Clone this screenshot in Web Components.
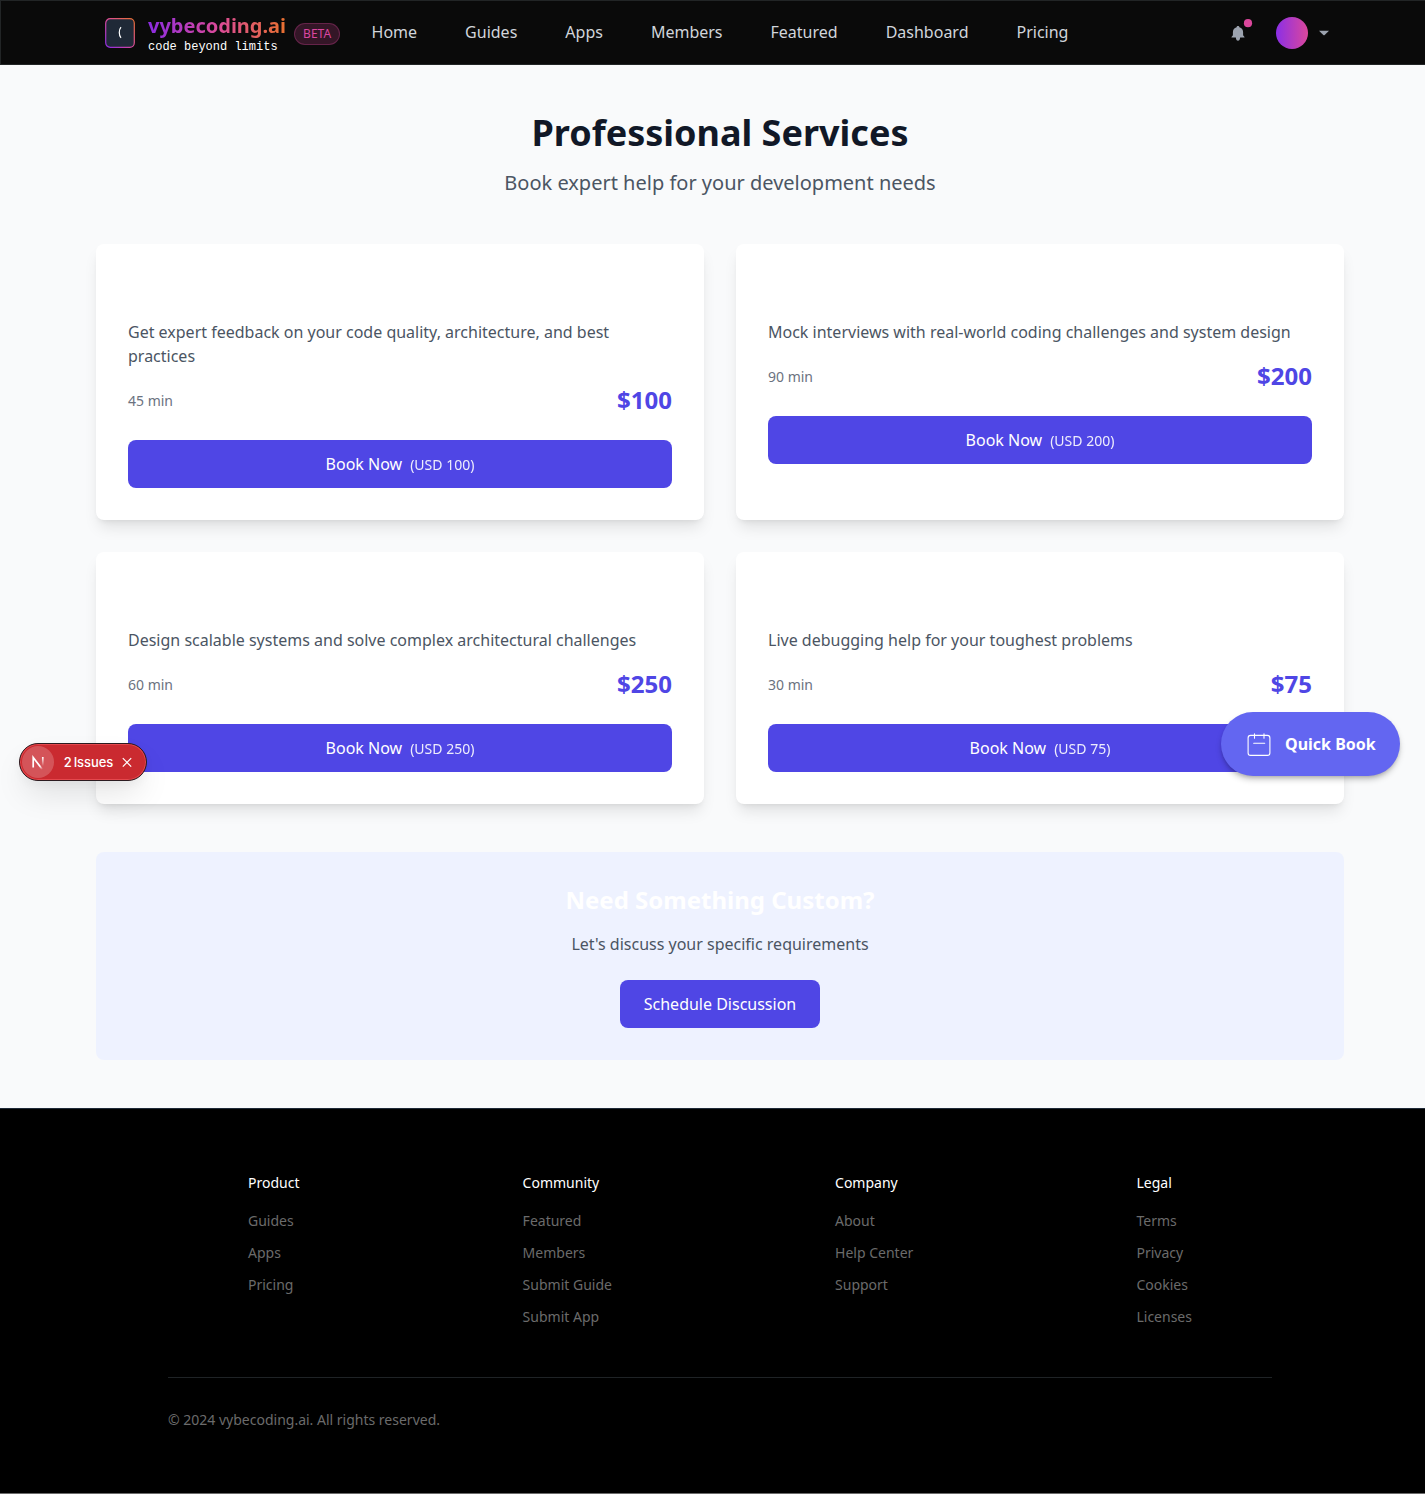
<!DOCTYPE html>
<html lang="en">
<head>
<meta charset="utf-8">
<title>vybecoding.ai - Professional Services</title>
<style>
html,body{margin:0;padding:0}
html{overflow:hidden;background:#000}
body{width:1440px;font:16px/24px "Noto Sans",sans-serif;color:#4b5563;background:#f9fafb}
</style>
</head>
<body>
<app-page></app-page>
<script>
const define = (name, css, html) => customElements.define(name, class extends HTMLElement {
  constructor() {
    super();
    const t = document.createElement('template');
    t.innerHTML = `<style>*{box-sizing:border-box}${css}</style>` + (typeof html === 'function' ? html(this) : html);
    this.attachShadow({ mode: 'open' }).append(t.content.cloneNode(true));
  }
});

define('brand-logo', `
:host{display:flex;align-items:center;height:64px}
.tile{display:block;width:32px;height:32px;margin:0 12px 0 8px}
.name{font-size:20px;line-height:28px;font-weight:700;background:linear-gradient(90deg,#8b2be2,#db4a9b 50%,#e8702f);background-clip:text;-webkit-background-clip:text;color:transparent;height:28px;margin-top:-1px}
.tag{font:12px/12px "Liberation Mono",monospace;color:#fff;white-space:pre;padding-top:1px}
.beta{margin-left:8px;height:22px;padding:0 8px;border:1px solid rgba(219,71,156,.3);border-radius:11px;background:rgba(219,71,156,.2);color:#db47a0;font-size:12px;line-height:20px;margin-top:2px}
`, `<svg class="tile" viewBox="0 0 32 32"><defs><linearGradient id="g" x1="0" y1="1" x2="1" y2="0"><stop stop-color="#8b2be2"/><stop offset=".5" stop-color="#db4a9b"/><stop offset="1" stop-color="#e8702f"/></linearGradient></defs><rect x="1.7" y="1.7" width="28.6" height="28.6" rx="4.5" fill="#1f2937" stroke="url(#g)" stroke-width="1.2"/><path d="M17 10.1C14.7 12.8 14.7 18 17 20.8" fill="none" stroke="#fff" stroke-width="1.2"/></svg>
<div><div class="name">vybecoding.ai</div><div class="tag">code beyond limits</div></div><span class="beta">BETA</span>`);

define('nav-link', `:host{display:block;color:#d1d5db;line-height:24px}`, `<slot></slot>`);

define('user-tools', `
:host{display:flex;align-items:center;height:64px}
svg{display:block;overflow:visible}
.avatar{width:32px;height:32px;border-radius:50%;background:linear-gradient(90deg,#8b2fe6,#db479c);margin:0 10px 0 26px}
`, `<svg width="24" height="32" viewBox="0 0 24 32"><path transform="translate(0 -.8)" d="M12 9.8c.9 0 1.3.5 1.4 1.2 2.4.7 3.7 2.6 3.7 5v3.1l1.4 1.7v.6h-13v-.6l1.4-1.7V16c0-2.4 1.3-4.3 3.7-5 .1-.7.5-1.2 1.4-1.2zM9.8 21h4.4c-.2 2.4-1 3.5-2.2 3.5S10 23.4 9.8 21z" fill="#9ca3af"/><circle cx="22" cy="6.2" r="4.1" fill="#db479c"/></svg>
<div class="avatar"></div><svg width="12" height="8"><path d="M1 1.7h10L6.7 6q-.7.6-1.4 0z" fill="#9ca3af"/></svg>`);

define('site-header', `
:host{display:block;height:65px;background:#0a0a0a;border:1px solid #222526;border-right:0}
.in{width:1248px;margin:0 auto 0 95px;display:flex;align-items:center;height:63px}
nav{display:flex;gap:48px;margin:0 0 2px 31.5px;height:24px}
user-tools{margin:0 14px 0 auto}
`, `<div class="in"><brand-logo></brand-logo><nav>${['Home','Guides','Apps','Members','Featured','Dashboard','Pricing'].map(n=>`<nav-link>${n}</nav-link>`).join('')}</nav><user-tools></user-tools></div>`);

define('action-button', `
:host{display:flex;align-items:center;justify-content:center;gap:8px;height:48px;padding:0 24px;border-radius:8px;background:#4f46e5;color:#fff;box-sizing:border-box}
::slotted(small){font-size:14px;opacity:.9}
`, `<slot></slot>`);

define('service-card', `
:host{display:block;box-sizing:border-box;padding:76px 32px 32px;background:#fff;border-radius:8px;box-shadow:0 10px 15px -3px rgba(0,0,0,.1),0 4px 6px -4px rgba(0,0,0,.1)}
p{margin:0 0 16px}
.meta{display:flex;justify-content:space-between;align-items:center;margin-bottom:24px}
.time{font-size:14px;line-height:20px;color:#6b7280;padding-top:2px}
.price{font-size:24px;line-height:32px;font-weight:700;color:#4f46e5}
small{padding-top:1px}
`, el => `<p><slot></slot></p><div class="meta"><span class="time">${el.getAttribute('time')}</span><span class="price">$${el.getAttribute('price')}</span></div><action-button><span>Book Now</span><small>(USD ${el.getAttribute('price')})</small></action-button>`);

define('custom-panel', `
:host{display:flex;flex-direction:column;align-items:center;padding:32px;background:#eef2ff;border-radius:8px}
h2{margin:0 0 16px;font-size:24px;line-height:32px;color:#fff}
p{margin:0 0 24px}
`, `<h2>Need Something Custom?</h2><p>Let's discuss your specific requirements</p><action-button>Schedule Discussion</action-button>`);

define('services-main', `
:host{display:block;padding:47px 96px 48px}
header{text-align:center}
h1{margin:0 0 16px;font-size:36px;line-height:40px;color:#111827;padding-top:1px}
header p{margin:0;font-size:20px;line-height:28px}
.grid{display:grid;grid-template-columns:1fr 1fr;gap:32px;margin:47px 0 48px}
`, `<header><h1>Professional Services</h1><p>Book expert help for your development needs</p></header>
<div class="grid">
<service-card time="45 min" price="100">Get expert feedback on your code quality, architecture, and best practices</service-card>
<service-card time="90 min" price="200">Mock interviews with real-world coding challenges and system design</service-card>
<service-card time="60 min" price="250">Design scalable systems and solve complex architectural challenges</service-card>
<service-card time="30 min" price="75">Live debugging help for your toughest problems</service-card>
</div><custom-panel></custom-panel>`);

define('footer-column', `
:host{display:block;font-size:14px}
h3{margin:0 0 16px;font-size:14px;line-height:20px;font-weight:400;color:#fff}
div{display:flex;flex-direction:column;gap:8px}
::slotted(span){line-height:24px;color:#6b6b6b}
`, el => `<h3>${el.getAttribute('heading')}</h3><div><slot></slot></div>`);

const columns = { Product:['Guides','Apps','Pricing'], Community:['Featured','Members','Submit Guide','Submit App'], Company:['About','Help Center','Support'], Legal:['Terms','Privacy','Cookies','Licenses'] };
define('site-footer', `
:host{display:block;box-sizing:border-box;height:386px;background:#000;border-top:1px solid #1f2937;border-bottom:1px solid #6b6b6b;padding:64px 168px 0}
.cols{display:flex;justify-content:space-between;padding:0 80px;margin-bottom:48px}
.legal{border-top:1px solid #1f2326;padding-top:32px;font-size:14px;line-height:20px;color:#6b6b6b}
`, `<div class="cols">${Object.entries(columns).map(([h,l])=>`<footer-column heading="${h}">${l.map(x=>`<span>${x}</span>`).join('')}</footer-column>`).join('')}</div><div class="legal">© 2024 vybecoding.ai. All rights reserved.</div>`);

define('quick-book', `
:host{position:absolute;left:1220.5px;top:712px;width:179.5px;height:64px;box-sizing:border-box;padding-left:24px;display:flex;align-items:center;gap:12.5px;border-radius:32px;background:#6366f1;color:#fff;font-weight:700;box-shadow:0 4px 6px -1px rgba(0,0,0,.25),0 2px 4px -2px rgba(0,0,0,.2)}
svg{flex:none}
`, `<svg width="28" height="28" fill="none" stroke="#fff" stroke-width="1.1" stroke-linecap="round"><rect x="3.1" y="5.4" width="21.8" height="20" rx="2.5"/><path d="M9.5 3.8v4.4M19 3.8v4.4M8.7 13.2h11"/></svg><span>Quick Book</span>`);

define('issues-pill', `
:host{position:absolute;left:18.7px;top:742.8px;width:128px;height:38px;box-sizing:border-box;padding-left:2.5px;display:flex;align-items:center;border-radius:19px;background:#ca2a30;border:1px solid #2b1b20;color:#fff;font:500 13px/20px Inter,sans-serif;box-shadow:inset 0 0 0 1px #e5484d,0 16px 32px -6px rgba(0,0,0,.13),0 4px 10px rgba(0,0,0,.04)}
.n{display:grid;place-items:center;width:32px;height:32px;border-radius:50%;background:rgba(255,255,255,.2);margin-right:9.5px}
.n svg{margin-right:1px}
.x{margin-left:9.5px}
span{white-space:nowrap;letter-spacing:-.1px;word-spacing:-1.3px;width:49px}
`, `<div class="n"><svg width="16" height="16" fill="none" stroke-width="1.7"><defs><linearGradient id="a" gradientUnits="userSpaceOnUse" x1="7" y1="6" x2="13" y2="15"><stop stop-color="#fff"/><stop offset=".6" stop-color="#fff"/><stop offset="1" stop-color="#fff" stop-opacity="0"/></linearGradient><linearGradient id="b" gradientUnits="userSpaceOnUse" x1="0" y1="3" x2="0" y2="12"><stop stop-color="#fff"/><stop offset="1" stop-color="#fff" stop-opacity="0"/></linearGradient></defs><path d="M3.2 13.4V3.4L12.2 15.2" stroke="url(#a)"/><path d="M12.8 3v9.5" stroke="url(#b)"/></svg></div><span>2 Issues</span><svg class="x" width="10" height="10" stroke="#fff" stroke-width="1.2"><path d="M.8 1.2l8.4 8.4M9.2 1.2L.8 9.6"/></svg>`);

define('app-page', `:host{display:block;position:relative}`, `<site-header></site-header><services-main></services-main><site-footer></site-footer><issues-pill></issues-pill><quick-book></quick-book>`);
</script>
</body>
</html>
